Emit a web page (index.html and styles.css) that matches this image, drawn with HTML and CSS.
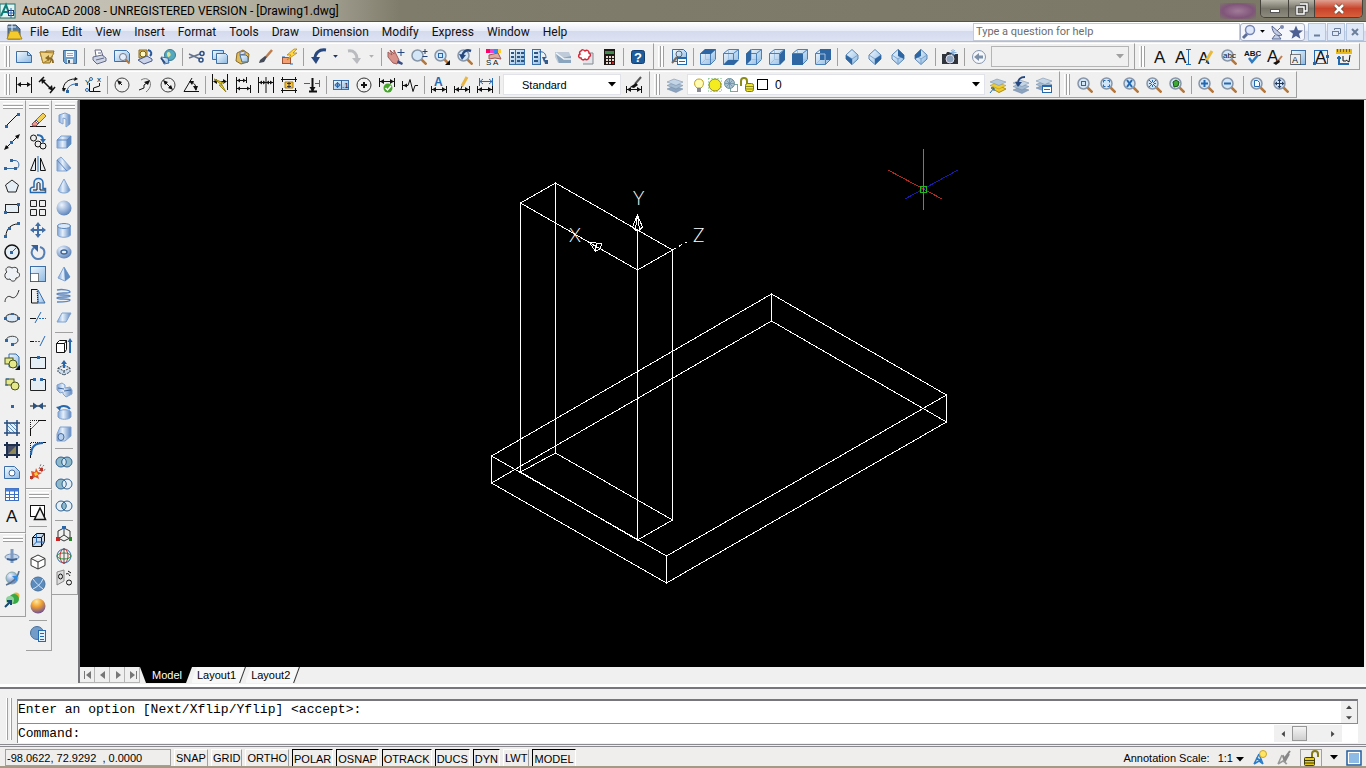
FILE: index.html
```html
<!DOCTYPE html>
<html lang="en">
<head>
  <meta charset="UTF-8">
  <meta name="viewport" content="width=device-width, initial-scale=1.0">
  <link rel="stylesheet" href="styles.css">

  <title>AutoCAD 2008 - UNREGISTERED VERSION - [Drawing1.dwg]</title>
</head>
<body>
  <!-- shared icon parts -->
  <svg class="defs">
    <defs>
      <linearGradient id="sky" x1="0" y1="0" x2="1" y2="1"><stop offset="0" stop-color="#f4faff"/><stop offset="1" stop-color="#8db9e2"/></linearGradient>
      <linearGradient id="steel" x1="0" y1="0" x2="1" y2="0"><stop offset="0" stop-color="#7fa3d3"/><stop offset=".4" stop-color="#e6f0fb"/><stop offset="1" stop-color="#5c86bf"/></linearGradient>
      <radialGradient id="ball" cx=".35" cy=".3" r=".8"><stop offset="0" stop-color="#eef5ff"/><stop offset="1" stop-color="#4d78b4"/></radialGradient>
      <radialGradient id="sun" cx=".4" cy=".2" r=".9"><stop offset="0" stop-color="#ffe9a0"/><stop offset=".4" stop-color="#f0a030"/><stop offset="1" stop-color="#5040b0"/></radialGradient>
    </defs>
    <symbol id="mag" viewBox="0 0 16 16"><path d="M10.5 10.5l5 5" stroke="#b5763a" stroke-width="2.5"/><circle cx="6.5" cy="6.5" r="5.5" fill="#d3e6f8" stroke="#8795a8" stroke-width="1.5"/></symbol>
    <symbol id="dim" viewBox="0 0 16 16"><path d="M.5 0v16M15.5 0v16M2 7.5h12" stroke="#111"/><path d="M1 7.5l4-2.5v5zM15 7.5l-4-2.5v5z" fill="#111"/></symbol>
    <symbol id="lowdim" viewBox="0 0 16 16"><path d="M.5 9v7M15.5 9v7M1 12.5h14" stroke="#111"/><path d="M1 12.5l4-2.5v5zM15 12.5l-4-2.5v5z" fill="#111"/></symbol>
    <symbol id="cube" viewBox="0 0 16 16"><path d="M.5 4.5l5-4h10v10l-5 5H.5z" fill="url(#sky)" stroke="#4a7fb8"/><path d="M5.5 1v9.5h10M5.5 10.5l-5 5" stroke="#a3c2e2" fill="none"/><path d="M.5 4.5h10v11M10.5 4.5l5-4" stroke="#4a7fb8" fill="none"/></symbol>
    <symbol id="iso" viewBox="0 0 16 16"><path d="M8 .5l6 5.5v4l-6 5.5L2 10V6z" fill="url(#sky)" stroke="#5a85b5"/><path d="M2 6l6 4 6-4M8 10v5" stroke="#7ba3cd" fill="none"/></symbol>
    <symbol id="layers" viewBox="0 0 16 16"><path d="M0 12l7-3 9 3-7 3.5z" fill="#8ca4bf" stroke="#6d86a3" stroke-width=".5"/><path d="M0 8.5l7-3 9 3-7 3.5z" fill="#a5bbd2" stroke="#6d86a3" stroke-width=".5"/><path d="M0 5l7-3 9 3-7 3.5z" fill="#c4d5e6" stroke="#6d86a3" stroke-width=".5"/></symbol>
    <symbol id="down" viewBox="0 0 8 5"><path d="M0 0h8L4 4.5z" fill="currentColor"/></symbol>
  </svg>

  <header class="titlebar">
    <svg class="ico" viewBox="0 0 16 16"><rect x="0" y="1" width="15" height="14" fill="#dff3f0" stroke="#1c6f6b"/><path d="M1 13L6 2l4 11M3 9h5" stroke="#0d7d78" stroke-width="2"/><rect x="8.5" y="7.5" width="5" height="5" fill="#fff" stroke="#236"/><path d="M11 5v10M7 10h8" class="b"/></svg>
    <h1>AutoCAD 2008 - UNREGISTERED VERSION - [Drawing1.dwg]</h1>
    <div class="glow"></div>
    <div class="window-buttons">
      <button class="min" aria-label="Minimize"><svg class="ico" viewBox="0 0 16 16"><rect x="3.5" y="8.5" width="9" height="3" fill="#fff" stroke="#555"/></svg></button>
      <button class="max" aria-label="Restore"><svg class="ico" viewBox="0 0 16 16"><path d="M6 3h7v7h-3M3 6h7v7H3z" stroke="#444" stroke-width="3"/><path d="M6 3h7v7h-3M3 6h7v7H3z" stroke="#fff" stroke-width="1.5"/></svg></button>
      <button class="close" aria-label="Close"><svg class="ico" viewBox="0 0 16 16"><path d="M4 4l8 8M12 4l-8 8" stroke="#643" stroke-width="4"/><path d="M4 4l8 8M12 4l-8 8" stroke="#fff" stroke-width="2.5"/></svg></button>
    </div>
  </header>

  <nav class="menubar">
    <svg class="ico" viewBox="0 0 16 16"><path d="M1 1h8l4 4v10H1z" fill="#5479a0" stroke="#456"/><path d="M0 15l3-8h8l4 8z" fill="#f3cb2c" stroke="#a8841a"/><path d="M5 0v7M1 3h8" stroke="#e8f4ff"/></svg>
    <a href="#">File</a>
    <a href="#">Edit</a>
    <a href="#">View</a>
    <a href="#">Insert</a>
    <a href="#">Format</a>
    <a href="#">Tools</a>
    <a href="#">Draw</a>
    <a href="#">Dimension</a>
    <a href="#">Modify</a>
    <a href="#">Express</a>
    <a href="#">Window</a>
    <a href="#">Help</a>
    <input class="help-search" type="text" placeholder="Type a question for help" aria-label="Type a question for help">
    <div class="info">
      <button aria-label="Search"><svg class="ico" viewBox="0 0 16 16"><path d="M6 10l-4 4" stroke="#5c6d99" stroke-width="3"/><circle cx="9" cy="6" r="4.5" fill="#dfe8fb" stroke="#7585b5" stroke-width="1.5"/></svg></button>
      <svg class="tiny"><use href="#down"/></svg>
      <button aria-label="Communication Center"><svg class="ico" viewBox="0 0 16 16"><path d="M3 2l10 9c-5 2-10-2-10-9zM8 7l5-5M6 11l-3 4h9l-3-4" fill="#c5cde4" stroke="#576690"/><circle cx="13" cy="3" r="2" fill="#7c89b2"/></svg></button>
      <button aria-label="Favorites"><svg class="ico" viewBox="0 0 16 16"><path d="M8 1.5l2 4.7 5 .3-4 3.3 1.4 5L8 12l-4.4 2.8L5 9.8 1 6.5l5-.3z" fill="#4e5f93"/></svg></button>
    </div>
    <div class="mdi">
      <button aria-label="Minimize drawing"><svg class="ico" viewBox="0 0 16 16"><path d="M5 11.5h6" stroke="#6b7f9c" stroke-width="2"/></svg></button>
      <button aria-label="Restore drawing"><svg class="ico" viewBox="0 0 16 16"><path d="M6.5 6V4.5h6v5H11M4.5 7.5h6v4h-6zM4 7.5h7" stroke="#6b7f9c"/></svg></button>
      <button aria-label="Close drawing"><svg class="ico" viewBox="0 0 16 16"><path d="M5 5l6 6M11 5l-6 6" stroke="#6b7f9c" stroke-width="2"/></svg></button>
    </div>
  </nav>

  <div class="toolbars">
    <div class="toolbar-row">
      <!-- Standard -->
      <div class="toolbar first">
        <button aria-label="New"><svg class="ico" viewBox="0 0 16 16"><path d="M.5 2.5h11l4 4v7H.5z" class="l"/><path d="M11.5 2.5v4h4" class="s"/></svg></button>
        <button aria-label="Open"><svg class="ico" viewBox="0 0 16 16"><path d="M1 3h6v-1h8l-4 12H4z" class="g"/><path d="M1 3l3 11 7-4 4-6z" fill="#ecd287" stroke="#a8812d"/><path d="M14 14c0-4-2-5-5-5" stroke="#8a6a25" stroke-width="2"/><path d="M10 6v6L6 9z" fill="#8a6a25"/></svg></button>
        <button aria-label="Save"><svg class="ico" viewBox="0 0 16 16"><path d="M1.5 1.5h13v13h-11l-2-2z" fill="#6f9fcb" stroke="#3d6c9b"/><rect x="4" y="2" width="8" height="6" fill="#f5f9fd"/><path d="M5 4.5h6M5 6.5h6" stroke="#9ab"/><rect x="5" y="10" width="6" height="4.5" fill="#e8eef4"/><rect x="6" y="11" width="2" height="3" fill="#456"/></svg></button>
        <span class="sep"></span>
        <button aria-label="Plot"><svg class="ico" viewBox="0 0 16 16"><path d="M5 7l-1-6h6l2 6" fill="#fff" stroke="#668"/><path d="M2 8l9-2 4 3v3l-9 3-4-4z" fill="#cfd5e4" stroke="#60698a"/><path d="M5 11l8-2M7 4h3" stroke="#60698a"/></svg></button>
        <button aria-label="Plot Preview"><svg class="ico" viewBox="0 0 16 16"><path d="M.5 1.5h12l3 3v8H.5z" class="l"/><circle cx="9" cy="8" r="3.5" fill="#e3eefa" stroke="#778"/><path d="M11.5 10.5l4 4" stroke="#b5763a" stroke-width="2"/></svg></button>
        <button aria-label="Publish"><svg class="ico" viewBox="0 0 16 16"><path d="M2 1h8v8H2z" class="g"/><circle cx="6" cy="5" r="3" fill="#fff7c0" stroke="#776010"/><path d="M1 11l9-4 5 3v2l-8 3z" fill="#cad3e8" stroke="#465a8b"/><path d="M11 1c4 1 4 4 2 6" stroke="#29599b" stroke-width="2"/></svg></button>
        <button aria-label="3DDWF"><svg class="ico" viewBox="0 0 16 16"><circle cx="10" cy="6" r="5.5" fill="#54a9bc" stroke="#3b7993"/><path d="M7 4c2-3 5 1 3 3s-3 1-3-3z" fill="#d8e5a0"/><path d="M1 8l7 1 1 5-5 1z" class="l"/><path d="M1 9l4 5" stroke="#2d4f85" stroke-width="2"/></svg></button>
        <span class="sep"></span>
        <button aria-label="Cut"><svg class="ico" viewBox="0 0 16 16"><path d="M0 5l11 5M0 9l11-4" stroke="#64748e" stroke-width="1.5"/><circle cx="13" cy="4.5" r="2" stroke="#2c4f87" stroke-width="1.5"/><circle cx="12" cy="11" r="2" stroke="#2c4f87" stroke-width="1.5"/></svg></button>
        <button aria-label="Copy"><svg class="ico" viewBox="0 0 16 16"><path d="M.5 1.5h11v9H.5z" class="l"/><path d="M4.5 4.5h9l2 2v8h-11z" class="l"/></svg></button>
        <button aria-label="Paste"><svg class="ico" viewBox="0 0 16 16"><path d="M2 4l6-3 6 4-1 8-7 2-5-3z" class="g"/><path d="M5 3l5-1v3l-5 1z" fill="#d9dee9" stroke="#778"/><path d="M5 6h6l2 2v5H7z" class="l"/></svg></button>
        <button aria-label="Match Properties"><svg class="ico" viewBox="0 0 16 16"><path d="M14 1L8 8" stroke="#be7d4c" stroke-width="2.5"/><path d="M9 8l-2-1-5 4-1 3 5-1z" fill="#444b57"/></svg></button>
        <button aria-label="Block Editor"><svg class="ico" viewBox="0 0 16 16"><rect x="1.5" y="8.5" width="8" height="6" fill="#f2a074" stroke="#a05433"/><path d="M13 0L6 6h4l-4 5 10-7h-4l4-4z" fill="#ffd840" stroke="#ae7d12" stroke-width=".7"/><path d="M1 8h3M9 15h3" class="b"/></svg></button>
        <span class="sep"></span>
        <button aria-label="Undo"><svg class="ico" viewBox="0 0 16 16"><path d="M16 1C9 0 5 4 5 10" stroke="#27487f" stroke-width="3"/><path d="M1 8h9l-4 7z" fill="#27487f"/></svg></button>
        <button class="drop" aria-label="Undo list"><svg class="tiny"><use href="#down"/></svg></button>
        <button aria-label="Redo"><svg class="ico" viewBox="0 0 16 16"><path d="M2 2c6-1 9 3 9 8" stroke="#b9bbbf" stroke-width="3"/><path d="M6 9h9l-4 6z" fill="#b9bbbf"/></svg></button>
        <button class="drop off" aria-label="Redo list"><svg class="tiny"><use href="#down"/></svg></button>
        <span class="sep"></span>
        <button aria-label="Pan"><svg class="ico" viewBox="0 0 16 16"><path d="M0 3l4 3-2-5 4 4V1l3 6 2 4-2 4-4-1-5-6z" fill="#d8928a" stroke="#9f5f5c"/><path d="M10 11l5 3-1 2-5-2z" fill="#3b4e84"/><path d="M13 0v7M9.5 3.5h7" stroke="#27487f"/></svg></button>
        <button aria-label="Zoom Realtime"><svg class="ico" viewBox="0 0 16 16"><use href="#mag"/><path d="M14 0v5M11.5 2.5h5M11.5 7.5h5" stroke="#223f72"/></svg></button>
        <button aria-label="Zoom Window"><svg class="ico" viewBox="0 0 16 16"><use href="#mag"/><rect x="4.5" y="4.5" width="4" height="4" class="b"/><path d="M16 11v5h-5z" class="k"/></svg></button>
        <button aria-label="Zoom Previous"><svg class="ico" viewBox="0 0 16 16"><use href="#mag"/><path d="M14 2C9 0 6 3 5 7" stroke="#27487f" stroke-width="2.5"/><path d="M2 5l7 1-4 5z" fill="#27487f"/></svg></button>
        <span class="sep"></span>
        <button aria-label="Properties"><svg class="ico" viewBox="0 0 16 16"><path d="M0 2h4" stroke="#f06" stroke-width="4"/><path d="M4 2h4" stroke="#e4c" stroke-width="4"/><path d="M8 2h4" stroke="#38f" stroke-width="4"/><path d="M12 2h3" stroke="#fc3" stroke-width="4"/><path d="M3 6l9-2 3 6-6-1-6 1z" fill="#e0aca0" stroke="#955"/><text x="0" y="16" class="t8">S A</text></svg></button>
        <button aria-label="DesignCenter"><svg class="ico" viewBox="0 0 16 16"><rect x=".5" y=".5" width="15" height="15" class="l"/><path d="M6.5 0v16" class="s"/><path d="M2 4h3M2 8h3M2 12h3M8 4h3M12 4h3M8 8h3M12 8h3M8 12h3M12 12h3" stroke="#2e5480" stroke-width="2"/></svg></button>
        <button aria-label="Tool Palettes"><svg class="ico" viewBox="0 0 16 16"><rect x=".5" y=".5" width="8" height="15" class="l"/><path d="M2 4h4M2 8h4M2 12h4" stroke="#2e5480" stroke-width="2"/><path d="M7 3c5-1 7 2 7 6" class="b"/><path d="M10 8h4l-2 5zM12 11h4v4h-3z" fill="#345b8d"/></svg></button>
        <button aria-label="Sheet Set Manager"><svg class="ico" viewBox="0 0 16 16"><path d="M0 3h14l2 5v6H3L0 8z" fill="#bfcbd9"/><path d="M1 5l6 4 9-2v7H4z" fill="#8ba5be"/><path d="M1 4l8 6h7" stroke="#eef4f8" stroke-width="1.5"/></svg></button>
        <button aria-label="Markup Set Manager"><svg class="ico" viewBox="0 0 16 16"><path d="M4 4h11v11H5" fill="#e2e6eb" stroke="#84898f"/><path d="M3 2c1-2 3-1 4 0 2-2 4 0 4 2 2 1 2 3 0 4 0 3-3 3-4 2-2 2-4 0-4-1-3 0-3-3-1-4-1-1 0-3 1-3z" fill="#fff" stroke="#d22a3a" stroke-width="1.5"/></svg></button>
        <button aria-label="QuickCalc"><svg class="ico" viewBox="0 0 16 16"><rect x="3" y="0" width="11" height="16" fill="#1d1815"/><rect x="4" y="2" width="9" height="3" fill="#3f8a4c"/><path d="M5 8h2M8 8h2M11 8h2M5 11h2M8 11h2M11 11h2M5 14h2M8 14h2" stroke="#e8d8d0" stroke-width="2"/><path d="M11 14h2" stroke="#c22" stroke-width="2"/></svg></button>
        <span class="sep"></span>
        <button aria-label="Help"><svg class="ico" viewBox="0 0 16 16"><rect x="1.5" y="1.5" width="13" height="13" rx="2" fill="#1f5c9c" stroke="#153f70"/><text x="4" y="13" class="q">?</text></svg></button>
      </div>

      <!-- View -->
      <div class="toolbar">
        <button aria-label="Named Views"><svg class="ico" viewBox="0 0 16 16"><path d="M1.5.5h11l3 3v9h-14z" class="l"/><circle cx="8" cy="5" r="3" stroke="#567"/><path d="M6 8l-5 6" stroke="#776a60" stroke-width="2"/><rect x="6.5" y="8.5" width="9" height="7" fill="#fff" stroke="#2468b0"/><path d="M6 9h10" class="b2"/><path d="M8 12.5h6" class="b"/></svg></button>
        <span class="sep"></span>
        <button aria-label="Top"><svg class="ico" viewBox="0 0 16 16"><use href="#cube"/><path d="M0 5l5-5h11l-5 5z" class="bf"/></svg></button>
        <button aria-label="Bottom"><svg class="ico" viewBox="0 0 16 16"><use href="#cube"/><path d="M0 16l5-5h11l-5 5z" class="bf"/></svg></button>
        <button aria-label="Left"><svg class="ico" viewBox="0 0 16 16"><use href="#cube"/><path d="M0 5l5-5v11l-5 5z" class="bf"/></svg></button>
        <button aria-label="Right"><svg class="ico" viewBox="0 0 16 16"><use href="#cube"/><path d="M11 5l5-5v11l-5 5z" class="bf"/></svg></button>
        <button aria-label="Front"><svg class="ico" viewBox="0 0 16 16"><use href="#cube"/><path d="M0 5h11v11H0z" class="bf"/></svg></button>
        <button aria-label="Back"><svg class="ico" viewBox="0 0 16 16"><use href="#cube"/><path d="M5 0h11v11H5z" class="bf"/><path d="M5 5h5v6" stroke="#a3c2e2"/></svg></button>
        <span class="sep"></span>
        <button aria-label="SW Isometric"><svg class="ico" viewBox="0 0 16 16"><use href="#iso"/><path d="M2 6l6 4v6l-6-6z" class="bf"/></svg></button>
        <button aria-label="SE Isometric"><svg class="ico" viewBox="0 0 16 16"><use href="#iso"/><path d="M14 6l-6 4v6l6-6z" class="bf"/></svg></button>
        <button aria-label="NE Isometric"><svg class="ico" viewBox="0 0 16 16"><use href="#iso"/><path d="M8 0l6 6v4L8 7z" class="bf"/></svg></button>
        <button aria-label="NW Isometric"><svg class="ico" viewBox="0 0 16 16"><use href="#iso"/><path d="M8 0L2 6v4l6-3z" class="bf"/></svg></button>
        <span class="sep"></span>
        <button aria-label="Create Camera"><svg class="ico" viewBox="0 0 16 16"><path d="M0 5h4l1-2h5l1 2h5v10H0z" fill="#30353d"/><circle cx="8" cy="10" r="4" fill="#8ea5bf" stroke="#dde"/><path d="M11 0v7M7.5 3.5h7M9 1l4 5M13 1L9 6" stroke="#8cb3dc"/></svg></button>
        <span class="sep"></span>
        <button aria-label="Previous View"><svg class="ico" viewBox="0 0 16 16"><circle cx="8" cy="8" r="6.5" fill="#f5f7fa" stroke="#8496ae"/><path d="M3 8l5-4v2.5h4v3H8V12z" fill="#7c90aa"/></svg></button>
        <div class="combo disabled views">
          <select disabled aria-label="Viewport"><option></option></select>
          <svg class="arrow"><use href="#down"/></svg>
        </div>
      </div>

      <!-- Text -->
      <div class="toolbar">
        <button aria-label="Multiline Text"><svg class="ico" viewBox="0 0 16 16"><text x="2" y="14" class="ta">A</text></svg></button>
        <button aria-label="Single Line Text"><svg class="ico" viewBox="0 0 16 16"><text x="0" y="14" class="ta">A</text><path d="M11 .5h5M13.5 1v14M11 15.5h5" class="b"/></svg></button>
        <button aria-label="Edit Text"><svg class="ico" viewBox="0 0 16 16"><text x="0" y="15" class="ta">A</text><path d="M14 2L8 12" stroke="#e8b93c" stroke-width="3"/><path d="M8 14l1-3" stroke="#333"/></svg></button>
        <button aria-label="Find"><svg class="ico" viewBox="0 0 16 16"><use href="#mag"/><text x="2" y="9" class="t8">abc</text></svg></button>
        <button aria-label="Spell Check"><svg class="ico" viewBox="0 0 16 16"><text x="0" y="7" class="t8 bold">ABC</text><path d="M5 9l3 4 6-7" stroke="#2f7abf" stroke-width="2.5"/></svg></button>
        <button aria-label="Text Style"><svg class="ico" viewBox="0 0 16 16"><text x="0" y="13" class="ta">A</text><path d="M15 7l-4 5" stroke="#be7d4c" stroke-width="2"/><path d="M12 11l-6 3 3 2 4-3z" class="k"/></svg></button>
        <button aria-label="Scale Text"><svg class="ico" viewBox="0 0 16 16"><rect x="1.5" y="1.5" width="14" height="14" class="l"/><path d="M.5 5.5h10v10H.5z" fill="#eee" stroke="#111" stroke-dasharray="1 1"/><text x="2" y="14" class="t9">A</text></svg></button>
        <button aria-label="Justify Text"><svg class="ico" viewBox="0 0 16 16"><rect x="1.5" y="1.5" width="13" height="13" class="b"/><text x="2" y="14" class="ta">A</text><rect x="13" y="6" width="3" height="3" class="bf"/><rect x="0" y="13" width="3" height="3" class="bf"/></svg></button>
        <button aria-label="Convert Distance"><svg class="ico" viewBox="0 0 16 16"><path d="M0 2.5h16" stroke="#e5b920" stroke-width="5"/><path d="M1.5 0v3M4.5 0v3M7.5 0v3M10.5 0v3M13.5 0v3" stroke="#7a5d0a"/><path d="M3 7v8h10M1 9h4" class="b2"/><path d="M14 6l-1 7-3-2M7 7v5h3" stroke="#111"/></svg></button>
      </div>
    </div>

    <div class="toolbar-row">
      <!-- Dimension -->
      <div class="toolbar first">
        <button aria-label="Linear"><svg class="ico" viewBox="0 0 16 16"><use href="#dim"/></svg></button>
        <button aria-label="Aligned"><svg class="ico" viewBox="0 0 16 16"><path d="M5 0L0 5M16 10l-5 6M3 3l10 10" stroke-width="1.5"/><path d="M2 2l5 1-4 4zM14 13l-5-1 4-4z" class="k"/></svg></button>
        <button aria-label="Arc Length"><svg class="ico" viewBox="0 0 16 16"><path d="M1 14C1 6 6 2 13 2"/><path d="M5 15c0-4 3-8 9-8" class="b"/><path d="M13 0l3 2-4 2zM0 11l2 4 2-4z" class="k"/><rect x="13" y="6" width="3" height="3" class="bf"/><rect x="4" y="13" width="3" height="3" class="bf"/></svg></button>
        <button aria-label="Ordinate"><svg class="ico" viewBox="0 0 16 16"><text x="0" y="8" class="t8">Y</text><text x="12" y="5" class="t8">x</text><path d="M4.5 6v8.5h11M8.5 14v-3l6-2V6"/><circle cx="6" cy="2" r="1.5" class="b"/><circle cx="2" cy="13" r="1.5" class="b"/></svg></button>
        <span class="sep"></span>
        <button aria-label="Radius"><svg class="ico" viewBox="0 0 16 16"><circle cx="8" cy="8" r="7" stroke="#444"/><path d="M8 8L4 4"/><path d="M3 3l5 2-3 3z" class="k"/></svg></button>
        <button aria-label="Jogged"><svg class="ico" viewBox="0 0 16 16"><path d="M4 3c8-5 14 5 5 12" stroke="#777"/><path d="M2 13l5-2V8l4-3"/><path d="M13 3l-2 5-4-3z" class="k"/></svg></button>
        <button aria-label="Diameter"><svg class="ico" viewBox="0 0 16 16"><circle cx="8" cy="8" r="7" stroke="#444"/><path d="M4 4l8 8"/><path d="M3 3l5 2-3 3zM13 13l-5-2 3-3z" class="k"/></svg></button>
        <button aria-label="Angular"><svg class="ico" viewBox="0 0 16 16"><path d="M16 14.5H1L9 1M8 5c4 1 5 4 5 8"/><path d="M6 4h5L9 8zM13 14l-3-5h5z" class="k"/></svg></button>
        <span class="sep"></span>
        <button aria-label="Quick Dimension"><svg class="ico" viewBox="0 0 16 16"><use href="#dim" y="-3"/><path d="M2 2l8 6H7l7 7-5-9h3z" fill="#e8cf2a" stroke="#9b8a14"/></svg></button>
        <button aria-label="Baseline"><svg class="ico" viewBox="0 0 16 16"><path d="M1.5 0v16M11.5 0v6M15.5 8v8M2 3.5h9M2 11.5h13"/><path d="M2 3.5l3-2v4zM11 3.5l-3-2v4zM2 11.5l3-2v4zM15 11.5l-3-2v4z" class="k"/></svg></button>
        <button aria-label="Continue"><svg class="ico" viewBox="0 0 16 16"><path d="M.5 0v16M8 0v16M15.5 0v16M1 5.5h14"/><path d="M1 5.5l3-2v4zM8 5.5l-3-2v4zM8 5.5l3-2v4zM15 5.5l-3-2v4z" class="k"/></svg></button>
        <button aria-label="Dimension Space"><svg class="ico" viewBox="0 0 16 16"><path d="M0 2.5h16M0 13.5h16M1.5 0v5M14.5 0v5M1.5 11v5M14.5 11v5"/><path d="M4 5h8v6H4z" fill="#f5c43f" stroke="#a5790c"/><path d="M8 5v6M6 6.5h4M6 9.5h4" stroke="#334"/></svg></button>
        <button aria-label="Dimension Break"><svg class="ico" viewBox="0 0 16 16"><path d="M8.5 1v13M5 14.5h8" stroke-width="2"/><path d="M0 6.5h6M11 6.5h5M15.5 3v7" class="b"/><path d="M8.5 15l-3-5h6z" class="k"/></svg></button>
        <span class="sep"></span>
        <button aria-label="Tolerance"><svg class="ico" viewBox="0 0 16 16"><rect x=".5" y="3.5" width="15" height="9" class="l"/><path d="M8.5 3v10M4.5 5v6M1.5 8h6" class="b"/><circle cx="4.5" cy="8" r="2" class="b"/><text x="9" y="11" class="t8">.1</text></svg></button>
        <button aria-label="Center Mark"><svg class="ico" viewBox="0 0 16 16"><circle cx="8" cy="8" r="7" stroke="#333"/><path d="M8 5v6M5 8h6" stroke-width="2"/></svg></button>
        <button aria-label="Inspection"><svg class="ico" viewBox="0 0 16 16"><path d="M.5 1v9M15.5 1v9M1 4.5h14"/><path d="M1 4.5L5 2v5zM15 4.5L11 2v5z" class="k"/><circle cx="9" cy="11" r="4.5" fill="#46a52b"/><path d="M6.5 11l2 2 3.5-4" stroke="#fff" stroke-width="1.5"/></svg></button>
        <button aria-label="Jogged Linear"><svg class="ico" viewBox="0 0 16 16"><path d="M.5 4v9M1 8.5h5l2-6 3 12 2-6h3"/><path d="M1 8.5l4-2v4z" class="k"/></svg></button>
        <span class="sep"></span>
        <button aria-label="Dimension Edit"><svg class="ico" viewBox="0 0 16 16"><use href="#lowdim"/><text x="3" y="9" class="ab">A</text></svg></button>
        <button aria-label="Dimension Text Edit"><svg class="ico" viewBox="0 0 16 16"><use href="#lowdim"/><path d="M13 0L8 9" stroke="#eab543" stroke-width="3"/><path d="M7 12l1-3"/></svg></button>
        <button aria-label="Dimension Update"><svg class="ico" viewBox="0 0 16 16"><use href="#lowdim"/><path d="M2.5 1v8M15.5 1v8M3 4.5h12M6 2L3 4.5 6 7M12 2l3 2.5L12 7" class="b"/></svg></button>
        <span class="sep"></span>
        <div class="combo styles">
          <select aria-label="Dimension style"><option>Standard</option></select>
          <svg class="arrow"><use href="#down"/></svg>
        </div>
        <button aria-label="Dimension Style"><svg class="ico" viewBox="0 0 16 16"><use href="#lowdim"/><path d="M15 0L9 7" stroke="#555" stroke-width="2"/><path d="M10 6l-6 4 4 1 4-3z" class="k"/></svg></button>
      </div>

      <!-- Layers -->
      <div class="toolbar">
        <button aria-label="Layer Properties Manager"><svg class="ico" viewBox="0 0 16 16"><use href="#layers"/></svg></button>
        <div class="combo layer">
          <svg class="ico" viewBox="0 0 16 16"><path d="M6 11C2 8 3 2 8 2s6 6 2 9z" fill="#fffbb0" stroke="#c0a020"/><path d="M6 12h4M6 14h4" stroke="#667" stroke-width="1.5"/></svg>
          <svg class="ico" viewBox="0 0 16 16"><rect x="1.5" y="1.5" width="13" height="13" stroke="#6b7" stroke-dasharray="1 2"/><circle cx="8" cy="8" r="6" fill="#f4ec1e" stroke="#8b8a20"/></svg>
          <svg class="ico" viewBox="0 0 16 16"><rect x="7.5" y="7.5" width="7" height="7" fill="#fff" stroke="#7a9"/><circle cx="6.5" cy="6.5" r="5" fill="#a9c1cc" stroke="#6d8fa0"/><path d="M6.5 2v9M2 6.5h9M3.5 3.5l6 6M9.5 3.5l-6 6" stroke="#6588a5" stroke-width=".7"/></svg>
          <svg class="ico" viewBox="0 0 16 16"><path d="M2 9V4c0-4 6-4 6 0v4" stroke="#8c8b1a" stroke-width="2"/><rect x="6.5" y="6.5" width="8" height="8" rx="2" fill="#f1e52b" stroke="#7c7a12"/><path d="M7 9.5h7M7 12h7" stroke="#8c8b1a"/></svg>
          <span class="swatch"></span>
          <select aria-label="Layer"><option>0</option></select>
          <svg class="arrow"><use href="#down"/></svg>
        </div>
        <button aria-label="Make Object's Layer Current"><svg class="ico" viewBox="0 0 16 16"><path d="M1 11l7-3 8 4-7 3.5z" fill="#f0cc30" stroke="#a98d16"/><path d="M0 8.5l7-3 9 3-7 3.5z" fill="#f0cc30" stroke="#a98d16" stroke-width=".5"/><path d="M0 5l7-3 9 3-7 3.5z" fill="#b5c9dd" stroke="#6d86a3" stroke-width=".5"/><path d="M0 16l4-5M1 11h3v3" class="b"/></svg></button>
        <button aria-label="Layer Previous"><svg class="ico" viewBox="0 0 16 16"><use href="#layers" y="1"/><path d="M12 0C7 0 5 3 5 6" stroke="#27487f" stroke-width="2"/><path d="M2 5h7l-4 5z" fill="#27487f"/></svg></button>
        <button aria-label="Layer States Manager"><svg class="ico" viewBox="0 0 16 16"><use href="#layers" y="-1"/><rect x="6.5" y="8.5" width="9" height="7" fill="#fff" stroke="#2468b0"/><path d="M6 9h10" class="b2"/><path d="M8 12.5h6" class="b"/></svg></button>
      </div>

      <!-- Zoom -->
      <div class="toolbar">
        <button aria-label="Zoom Window"><svg class="ico" viewBox="0 0 16 16"><use href="#mag"/><rect x="4.5" y="4.5" width="4" height="4" class="b"/></svg></button>
        <button aria-label="Zoom Dynamic"><svg class="ico" viewBox="0 0 16 16"><use href="#mag"/><path d="M3.5 5.5v-2h2M7.5 3.5h2v2M9.5 7.5v2h-2M5.5 9.5h-2v-2" class="b"/></svg></button>
        <button aria-label="Zoom Scale"><svg class="ico" viewBox="0 0 16 16"><use href="#mag"/><path d="M4 3l5 7M9 3l-5 7" class="b2"/></svg></button>
        <button aria-label="Zoom Center"><svg class="ico" viewBox="0 0 16 16"><use href="#mag"/><path d="M3 3l3 3M10 3L7 6M3 10l3-3M10 10L7 7M6.5 3v2M6.5 8v2M3 6.5h2M8 6.5h2" class="b"/></svg></button>
        <button aria-label="Zoom Object"><svg class="ico" viewBox="0 0 16 16"><use href="#mag"/><path d="M4 5l3-2 3 2-1 4-4 1z" fill="#3faa35" stroke="#14550f"/></svg></button>
        <span class="sep"></span>
        <button aria-label="Zoom In"><svg class="ico" viewBox="0 0 16 16"><use href="#mag"/><path d="M6.5 3v7M3 6.5h7" class="b2"/></svg></button>
        <button aria-label="Zoom Out"><svg class="ico" viewBox="0 0 16 16"><use href="#mag"/><path d="M3 6.5h7" class="b2"/></svg></button>
        <span class="sep"></span>
        <button aria-label="Zoom All"><svg class="ico" viewBox="0 0 16 16"><use href="#mag"/><path d="M4.5 3.5h3l2 2v4h-5z" fill="#f4f9ff" stroke="#2468b0"/></svg></button>
        <button aria-label="Zoom Extents"><svg class="ico" viewBox="0 0 16 16"><use href="#mag"/><path d="M6.5 3v7M3 6.5h7" stroke="#223a60"/><path d="M6.5 1.5l2 2.5h-4zM6.5 11.5l2-2.5h-4zM1.5 6.5L4 4.5v4zM11.5 6.5L9 4.5v4z" fill="#223a60"/></svg></button>
      </div>
    </div>
  </div>

  <main class="workspace">
    <aside class="side">
      <div class="side-col">
        <!-- Draw -->
        <div class="toolbar vertical">
          <button aria-label="Line"><svg class="ico" viewBox="0 0 16 16"><path d="M2 14L14 2"/><rect x="1" y="13" width="3" height="3" class="bf"/><rect x="13" y="1" width="3" height="3" class="bf"/></svg></button>
          <button aria-label="Construction Line"><svg class="ico" viewBox="0 0 16 16"><path d="M1 15L15 1"/><path d="M0 16l2-5 3 3zM16 0l-5 2 3 3z" class="k"/><rect x="6" y="7" width="3" height="3" class="bf"/></svg></button>
          <button aria-label="Polyline"><svg class="ico" viewBox="0 0 16 16"><path d="M1 12.5h11M8 4.5h3c5 0 5 8 1 8" class="s"/><rect x="0" y="11" width="3" height="3" class="bf"/><rect x="10" y="11" width="3" height="3" class="bf"/><rect x="6" y="3" width="3" height="3" class="bf"/></svg></button>
          <button aria-label="Polygon"><svg class="ico" viewBox="0 0 16 16"><path d="M8 2l6.5 5-2.5 7H4L1.5 7z" fill="#e5edf5" stroke="#222"/></svg></button>
          <button aria-label="Rectangle"><svg class="ico" viewBox="0 0 16 16"><rect x="1.5" y="4.5" width="13" height="8" fill="#e5edf5" stroke="#222"/><rect x="0" y="11" width="3" height="3" class="bf"/><rect x="13" y="3" width="3" height="3" class="bf"/></svg></button>
          <button aria-label="Arc"><svg class="ico" viewBox="0 0 16 16"><path d="M2 14C2 7 7 2 14 2"/><rect x="0" y="13" width="3" height="3" class="bf"/><rect x="4" y="5" width="3" height="3" class="bf"/><rect x="13" y="0" width="3" height="3" class="bf"/></svg></button>
          <button aria-label="Circle"><svg class="ico" viewBox="0 0 16 16"><circle cx="8" cy="8" r="7" fill="#e5edf5" stroke="#111" stroke-width="1.5"/><path d="M8 8l4-4" class="b"/><rect x="6" y="7" width="3" height="3" class="bf"/></svg></button>
          <button aria-label="Revision Cloud"><svg class="ico" viewBox="0 0 16 16"><path d="M3 6C0 3 4-1 8 2c4-2 7 1 5 4 4 1 3 6-1 6 0 4-5 4-6 1-5 2-7-5-3-7z" fill="#eef2f6" stroke="#333"/></svg></button>
          <button aria-label="Spline"><svg class="ico" viewBox="0 0 16 16"><path d="M1 14c0-4 3-7 6-5s6 0 8-7" stroke="#333"/></svg></button>
          <button aria-label="Ellipse"><svg class="ico" viewBox="0 0 16 16"><ellipse cx="8" cy="8" rx="6.5" ry="4" fill="#d9e6f3" stroke="#222"/><rect x="0" y="7" width="3" height="3" class="bf"/><rect x="13" y="7" width="3" height="3" class="bf"/><rect x="7" y="3" width="3" height="2" class="bf"/></svg></button>
          <button aria-label="Ellipse Arc"><svg class="ico" viewBox="0 0 16 16"><path d="M2 8c1-5 12-5 12 0 0 3-3 4-6 4" fill="#e5edf5" stroke="#444"/><rect x="1" y="7" width="3" height="3" class="bf"/><rect x="7" y="11" width="3" height="3" class="bf"/></svg></button>
          <button aria-label="Insert Block"><svg class="ico" viewBox="0 0 16 16"><path d="M5 0h7l3 3v10H5z" class="l"/><rect x="1" y="4" width="8" height="6" class="y"/><circle cx="9" cy="10" r="4" class="y"/><path d="M16 11v5h-5z" class="k"/></svg></button>
          <button aria-label="Make Block"><svg class="ico" viewBox="0 0 16 16"><rect x="2" y="3" width="8" height="6" class="y"/><circle cx="11" cy="10" r="4" class="y"/><path d="M1 9h3M2 3h3" class="b"/></svg></button>
          <button aria-label="Point"><svg class="ico" viewBox="0 0 16 16"><rect x="7" y="7" width="3" height="3" class="bf"/></svg></button>
          <button aria-label="Hatch"><svg class="ico" viewBox="0 0 16 16"><path d="M3 3h10v10H3z" fill="#e7f1fb"/><path d="M3 9l4 4M3 5l8 8M5 3l8 8M9 3l4 4" stroke="#5a8cc0"/><path d="M3 0v16M13 0v16M0 3h16M0 13h16" stroke="#244a7b" stroke-width="1.5"/></svg></button>
          <button aria-label="Gradient"><svg class="ico" viewBox="0 0 16 16"><path d="M3 3h10v10H3z" fill="#8e875a"/><path d="M3 3h10l-10 10z" fill="#454d66"/><path d="M3 0v16M13 0v16M0 3h16M0 13h16" stroke="#1d2f4d" stroke-width="2"/></svg></button>
          <button aria-label="Region"><svg class="ico" viewBox="0 0 16 16"><path d="M.5 2.5h10l5 5v7H.5z" class="l"/><circle cx="8" cy="9" r="3" fill="#fff" stroke="#3c6ea8"/></svg></button>
          <button aria-label="Table"><svg class="ico" viewBox="0 0 16 16"><rect x="1.5" y="2.5" width="13" height="12" fill="#fff" stroke="#3f6fc0"/><path d="M2 4h12" stroke="#4a7cd0" stroke-width="3"/><path d="M2 8.5h12M2 11.5h12M5.5 5v9M10.5 5v9" stroke="#3f6fc0"/></svg></button>
          <button aria-label="Multiline Text"><svg class="ico" viewBox="0 0 16 16"><text x="2" y="14" class="ta">A</text></svg></button>
        </div>
        <!-- 3D navigation -->
        <div class="toolbar vertical">
          <button aria-label="3D Pan"><svg class="ico" viewBox="0 0 16 16"><ellipse cx="8" cy="9" rx="7" ry="3" fill="#c5d5e8" stroke="#7a96ba"/><path d="M8 1v14" stroke="#7f9bc2" stroke-width="3"/><path d="M3 11l5 1 5-1" stroke="#3d6296" stroke-width="2"/></svg></button>
          <button aria-label="3D Orbit"><svg class="ico" viewBox="0 0 16 16"><circle cx="8" cy="8" r="6" fill="url(#ball)" stroke="#8aa"/><path d="M2 15C8 13 14 8 15 1" stroke="#5a6f8f" stroke-width="1.5"/><path d="M8 6h5v5z" fill="#2b8be5"/></svg></button>
          <button aria-label="3D Swivel"><svg class="ico" viewBox="0 0 16 16"><circle cx="12" cy="4" r="3.5" fill="#e8b43a"/><circle cx="10" cy="7" r="5" fill="#39a845"/><circle cx="6" cy="8" r="4" fill="#8fd09b"/><path d="M1 15l6-6M3 9h4v4" stroke="#174a72" stroke-width="2"/></svg></button>
        </div>
      </div>

      <div class="side-col">
        <!-- Modify -->
        <div class="toolbar vertical">
          <button aria-label="Erase"><svg class="ico" viewBox="0 0 16 16"><path d="M0 14.5h16"/><path d="M13 1l3 3-7 7-3-3z" fill="#f2cf56" stroke="#94701b"/><path d="M6 8l3 3-1 1-3-3z" fill="#fff" stroke="#456"/><path d="M5 9l3 3-2 2H3l-1-2z" fill="#e69c88" stroke="#945"/></svg></button>
          <button aria-label="Copy"><svg class="ico" viewBox="0 0 16 16"><circle cx="3.5" cy="4" r="3" fill="#eee" stroke="#111"/><circle cx="8" cy="10" r="3" fill="#eee" stroke="#111"/><circle cx="13" cy="12" r="3" fill="#eee" stroke="#111"/><path d="M7 1c4 0 6 1 6 5" class="b2"/><path d="M10 5h6l-3 4z" class="bf"/></svg></button>
          <button aria-label="Mirror"><svg class="ico" viewBox="0 0 16 16"><path d="M5.5 2v12.5H.5zM10.5 2v12.5h5z" fill="#e8eef5" stroke="#111"/><path d="M8 0v16" class="b"/></svg></button>
          <button aria-label="Offset"><svg class="ico" viewBox="0 0 16 16"><path d="M.5 14.5h15v-4H13V5c0-6-9-6-9 0v4C0 9 0 11 .5 14.5z" fill="#e2edf8" stroke="#2468b0" stroke-width="1.5"/><path d="M3 12h4V6c0-2 3-2 3 0v6h5"/></svg></button>
          <button aria-label="Array"><svg class="ico" viewBox="0 0 16 16"><path d="M.5.5h6v6h-6zM9.5.5h6v6h-6zM.5 9.5h6v6h-6zM9.5 9.5h6v6h-6z" fill="#eee" stroke="#222"/></svg></button>
          <button aria-label="Move"><svg class="ico" viewBox="0 0 16 16"><path d="M8 2v12M2 8h12" stroke="#426ea6" stroke-width="2"/><path d="M8 0l3 4H5zM8 16l3-4H5zM0 8l4-3v6zM16 8l-4-3v6z" fill="#426ea6"/></svg></button>
          <button aria-label="Rotate"><svg class="ico" viewBox="0 0 16 16"><path d="M4 3.5C-1 8 3 15 8 15c7 0 9-10 2-12" stroke="#557fb4" stroke-width="2"/><path d="M1 1h7v7z" fill="#345f98"/></svg></button>
          <button aria-label="Scale"><svg class="ico" viewBox="0 0 16 16"><rect x=".5" y=".5" width="15" height="15" class="l"/><rect x=".5" y="7.5" width="8" height="8" fill="#fff" stroke="#111" stroke-dasharray="1 1"/></svg></button>
          <button aria-label="Stretch"><svg class="ico" viewBox="0 0 16 16"><path d="M8 2l7 13H8z" class="l"/><path d="M1.5 1v14H8M2 1.5h5" stroke="#111"/><path d="M7 1l1 14" stroke-dasharray="1 1"/></svg></button>
          <button aria-label="Trim"><svg class="ico" viewBox="0 0 16 16"><path d="M0 8.5h6"/><path d="M5 13l6-11" class="b"/><path d="M9 8.5h7" class="b" stroke-dasharray="2 1"/></svg></button>
          <button aria-label="Extend"><svg class="ico" viewBox="0 0 16 16"><path d="M0 9.5h4"/><path d="M5 9.5h6" class="b" stroke-dasharray="2 1"/><path d="M10 14l5-10" class="b"/></svg></button>
          <button aria-label="Break at Point"><svg class="ico" viewBox="0 0 16 16"><rect x=".5" y="3.5" width="15" height="11" fill="#e5edf5" stroke="#222"/><rect x="7" y="2" width="3" height="3" class="bf"/></svg></button>
          <button aria-label="Break"><svg class="ico" viewBox="0 0 16 16"><path d="M3 3.5H.5v11h15v-11H13" fill="#e5edf5" stroke="#222"/><rect x="3" y="2" width="3" height="3" class="bf"/><rect x="10" y="2" width="3" height="3" class="bf"/></svg></button>
          <button aria-label="Join"><svg class="ico" viewBox="0 0 16 16"><path d="M0 8h16"/><path d="M3 4.5L8 8l-5 3.5zM13 4.5L8 8l5 3.5z" fill="#2b517f"/></svg></button>
          <button aria-label="Chamfer"><svg class="ico" viewBox="0 0 16 16"><path d="M.5 16V9M9 .5h7"/><path d="M.5 9V.5H9" stroke-dasharray="1 1"/><path d="M1 9l8-8" class="b"/></svg></button>
          <button aria-label="Fillet"><svg class="ico" viewBox="0 0 16 16"><path d="M.5 16v-4M13 .5h3"/><path d="M.5 12V.5H12" stroke-dasharray="1 1"/><path d="M1 13C1 5 5 1 13 1" class="b2"/></svg></button>
          <button aria-label="Explode"><svg class="ico" viewBox="0 0 16 16"><path d="M9 7l5-6M11 8l5-3M9 5l2-5" stroke="#777" stroke-dasharray="2 1"/><path d="M1 7l4 1 1-4 2 4 4 1-4 2 1 4-4-2-4 3 1-5z" fill="#e2532a"/><path d="M4 9l3-1 1 3-3 1z" fill="#ffd23b"/><path d="M0 12h3v3H0zM10 4h3v3h-3z" fill="#b3372a"/></svg></button>
        </div>
        <!-- Draw order / Visual styles -->
        <div class="toolbar vertical">
          <button aria-label="Draw Order"><svg class="ico" viewBox="0 0 16 16"><rect x=".5" y="1.5" width="14" height="11" fill="#fff" stroke="#111"/><path d="M10 4l5.5 11.5h-11z" fill="#eee" stroke="#111" stroke-width="1.5"/></svg></button>
          <span class="sep"></span>
          <button aria-label="3D Wireframe"><svg class="ico" viewBox="0 0 16 16"><path d="M2.5 5.5l4-4h8v8l-3 5h-9zM2.5 5.5h9v9M11.5 5.5l3-4" fill="#c8dbf0" stroke="#111"/><path d="M6.5 2v8h8M6.5 10l-4 4" class="b"/></svg></button>
          <button aria-label="3D Hidden"><svg class="ico" viewBox="0 0 16 16"><path d="M8 1l7 3.5v7L8 15l-7-3.5v-7zM1 4.5L8 8l7-3.5M8 8v7" fill="#fff" stroke="#333"/></svg></button>
          <button aria-label="Realistic"><svg class="ico" viewBox="0 0 16 16"><circle cx="8" cy="8" r="7" fill="#5b8bbd" stroke="#48709b"/><path d="M3 3c3 4 6 7 10 10M13 3C11 8 7 11 3 13" stroke="#d5e6f6"/></svg></button>
          <button aria-label="Conceptual"><svg class="ico" viewBox="0 0 16 16"><circle cx="8" cy="8" r="7.5" fill="url(#sun)"/></svg></button>
          <span class="sep"></span>
          <button aria-label="Manage Visual Styles"><svg class="ico" viewBox="0 0 16 16"><circle cx="7" cy="7" r="6.5" fill="#739cc8" stroke="#48709b"/><rect x="8.5" y="4.5" width="7" height="11" fill="#e4f0fb" stroke="#2468b0"/><path d="M10 7.5h4M10 10.5h4M10 13.5h4" class="b"/></svg></button>
        </div>
      </div>

      <div class="side-col">
        <!-- Modeling -->
        <div class="toolbar vertical">
          <button aria-label="Polysolid"><svg class="ico" viewBox="0 0 16 16"><path d="M3 3l6-2 5 2v9l-4 3V7L7 6v6l-4-2z" class="m"/></svg></button>
          <button aria-label="Box"><svg class="ico" viewBox="0 0 16 16"><path d="M1 6l4-4h10v8l-4 4H1z" class="m"/><path d="M1 6h10l4-4M11 6v8" stroke="#5c86bf"/><path d="M11 6l4-4v8l-4 4z" fill="#5f8cc2"/></svg></button>
          <button aria-label="Wedge"><svg class="ico" viewBox="0 0 16 16"><path d="M1 4l4-3 10 11-4 3H1z" class="m"/><path d="M1 4l10 11" stroke="#5c86bf"/></svg></button>
          <button aria-label="Cone"><svg class="ico" viewBox="0 0 16 16"><path d="M8 1l6 11c-1 4-11 4-12 0z" class="m"/></svg></button>
          <button aria-label="Sphere"><svg class="ico" viewBox="0 0 16 16"><circle cx="8" cy="8" r="7.5" fill="url(#ball)"/></svg></button>
          <button aria-label="Cylinder"><svg class="ico" viewBox="0 0 16 16"><path d="M1.5 4v9c1 3 12 3 13 0V4z" class="m"/><ellipse cx="8" cy="4" rx="6.5" ry="2.5" fill="#dbe8f7" stroke="#5c86bf"/></svg></button>
          <button aria-label="Torus"><svg class="ico" viewBox="0 0 16 16"><ellipse cx="8" cy="8" rx="7.5" ry="6.5" fill="url(#ball)"/><ellipse cx="8" cy="8" rx="3" ry="2" fill="#e8eef5" stroke="#3f6699" stroke-width="1.5"/></svg></button>
          <button aria-label="Pyramid"><svg class="ico" viewBox="0 0 16 16"><path d="M8 1l6 10-5 4-7-3z" class="m"/><path d="M8 1l6 10-5 4z" fill="#5f8cc2"/></svg></button>
          <button aria-label="Helix"><svg class="ico" viewBox="0 0 16 16"><path d="M1 2c5-1 13 0 13 2S1 4 1 6s13 0 13 2-13 0-13 2 13 0 13 2-8 2-13 2" stroke="#5c86bf" stroke-width="1.5"/></svg></button>
          <button aria-label="Planar Surface"><svg class="ico" viewBox="0 0 16 16"><path d="M6 3h9l-5 9H1z" class="m"/></svg></button>
          <span class="sep"></span>
          <button aria-label="Extrude"><svg class="ico" viewBox="0 0 16 16"><path d="M.5 5.5l3-3h7v9l-2 3h-8zM.5 5.5h8v9M8.5 5.5l2-3" fill="#fff" stroke="#111"/><path d="M14 15V2" class="b2"/><path d="M14 0l2.5 4h-5z" class="bf"/></svg></button>
          <button aria-label="Presspull"><svg class="ico" viewBox="0 0 16 16"><path d="M8 5l6 3v4l-6 3-6-3V8zM2 8l6 3 6-3M8 11v4" fill="#d1e0f1" stroke="#345" stroke-dasharray="2 1"/><path d="M8 8V3" class="b2"/><path d="M8 0l3 4H5z" class="bf"/></svg></button>
          <button aria-label="Sweep"><svg class="ico" viewBox="0 0 16 16"><path d="M1 3l5-2 3 2v3l5-1 2 3v4l-6 3-3-3v-2l-3 1-3-3z" class="m"/><path d="M2 6l6 1M8 9l7-1" stroke="#41699f"/></svg></button>
          <button aria-label="Revolve"><svg class="ico" viewBox="0 0 16 16"><path d="M2 8c2-3 12-3 13 0v5c-2 3-11 3-13 0z" class="m"/><path d="M3 5c1-4 8-4 11 0" class="b2"/><path d="M0 3l5-1-1 5z" class="bf"/></svg></button>
          <button aria-label="Loft"><svg class="ico" viewBox="0 0 16 16"><path d="M4 1h11v9L9 15H1V8z" class="m"/><ellipse cx="5" cy="11" rx="3" ry="3.5" fill="#b9d1ec" stroke="#41699f"/></svg></button>
          <span class="sep"></span>
          <button aria-label="Union"><svg class="ico" viewBox="0 0 16 16"><circle cx="5" cy="8" r="5" fill="#8fb9c9" stroke="#2c6192"/><circle cx="11" cy="8" r="5" fill="#8fb9c9" stroke="#2c6192"/><path d="M8 4c-3 2-3 6 0 8 3-2 3-6 0-8z" fill="#d5e6ef" stroke="#2c6192"/></svg></button>
          <button aria-label="Subtract"><svg class="ico" viewBox="0 0 16 16"><circle cx="5" cy="8" r="5" fill="#8fb9c9" stroke="#2c6192"/><circle cx="11" cy="8" r="5" fill="#e6eff5" stroke="#2c6192"/><path d="M8 4c3 2 3 6 0 8" stroke="#2c6192"/></svg></button>
          <button aria-label="Intersect"><svg class="ico" viewBox="0 0 16 16"><circle cx="5" cy="8" r="5" fill="#e6eff5" stroke="#2c6192"/><circle cx="11" cy="8" r="5" fill="#e6eff5" stroke="#2c6192"/><path d="M8 4c-3 2-3 6 0 8 3-2 3-6 0-8z" fill="#8fb9c9" stroke="#2c6192"/></svg></button>
          <span class="sep"></span>
          <button aria-label="3D Move"><svg class="ico" viewBox="0 0 16 16"><path d="M8 9V2M8 9l-6 4M8 9l6 4M2 5v7l6 3 6-3V5L8 2z" stroke="#333"/><rect x="0" y="11" width="4" height="4" fill="#c22"/><rect x="13" y="11" width="3" height="4" fill="#282"/><rect x="6" y="0" width="4" height="3" class="bf"/></svg></button>
          <button aria-label="3D Rotate"><svg class="ico" viewBox="0 0 16 16"><circle cx="8" cy="8" r="7" stroke="#2468b0"/><ellipse cx="8" cy="8" rx="4" ry="7" stroke="#c33"/><ellipse cx="8" cy="8" rx="7" ry="3" stroke="#383"/><path d="M8 0v16" stroke="#555"/></svg></button>
          <button aria-label="3D Align"><svg class="ico" viewBox="0 0 16 16"><path d="M1 2l7-2v11l-7 4z" fill="#ddd" stroke="#888"/><ellipse cx="4.5" cy="6.5" rx="2" ry="2.5" stroke="#111"/><circle cx="13" cy="12.5" r="2.5" stroke="#111"/><path d="M10 4c2-1 3 0 4 2M12 1l3 2"/></svg></button>
        </div>
      </div>
    </aside>

    <section class="view">
      <div class="canvas">
        <svg class="drawing" viewBox="80 100 1284 567">
          <!-- base plate -->
          <path d="M491.5 456L771.5 294 946.5 395 666.5 556z"/>
          <path d="M491.5 483L771.5 321 946.5 422 666.5 583z"/>
          <path d="M491.5 456v27M771.5 294v27M946.5 395v27M666.5 556v27"/>
          <!-- upright plate -->
          <path d="M520.5 203L555.5 183 672.5 250 637.5 270z"/>
          <path d="M520.5 472L555.5 453 672.5 520 637.5 540z"/>
          <path d="M520.5 203v269M555.5 183v270M672.5 250v270M637.5 230v310"/>
          <!-- UCS icon -->
          <path d="M637.5 215l-5 12 3 3h4l3-3zM635.5 229l2-14 2 14"/>
          <path d="M589.5 242.5l12 1-1 5-5 3zM589.5 242.5l9 6M595 251l2-7"/>
          <path d="M672.5 250l14-8" stroke-dasharray="4 3"/>
          <text x="633" y="205">Y</text>
          <text x="569" y="242">X</text>
          <text x="693" y="242">Z</text>
          <!-- crosshair -->
          <path class="axis-x" d="M888 170l54 29"/>
          <path class="axis-z" d="M958 170l-53 29"/>
          <path class="axis-y" d="M923.5 149v61"/>
          <rect class="axis-y" x="920.5" y="186.5" width="6" height="6"/>
        </svg>
      </div>
      <div class="tabs">
        <button class="nav" aria-label="First"><svg class="ico" viewBox="0 0 16 16"><path d="M4.5 4v8" stroke="#777"/><path d="M11 4v8L6 8z" fill="#777"/></svg></button>
        <button class="nav" aria-label="Previous"><svg class="ico" viewBox="0 0 16 16"><path d="M10 4v8L5 8z" fill="#777"/></svg></button>
        <button class="nav" aria-label="Next"><svg class="ico" viewBox="0 0 16 16"><path d="M6 4v8l5-4z" fill="#777"/></svg></button>
        <button class="nav" aria-label="Last"><svg class="ico" viewBox="0 0 16 16"><path d="M11.5 4v8" stroke="#777"/><path d="M5 4v8l5-4z" fill="#777"/></svg></button>
        <button class="tab active">Model</button>
        <button class="tab">Layout1</button>
        <button class="tab">Layout2</button>
      </div>
    </section>
  </main>

  <section class="command">
    <div class="history">
      <p>Enter an option [Next/Xflip/Yflip] &lt;accept&gt;:</p>
      <div class="vscroll">
        <button aria-label="Scroll up"><svg class="arrow up"><use href="#down"/></svg></button>
        <button aria-label="Scroll down"><svg class="arrow"><use href="#down"/></svg></button>
      </div>
    </div>
    <div class="prompt">
      <label for="cmd">Command:</label>
      <input type="text" id="cmd">
      <div class="hscroll">
        <button aria-label="Scroll left"><svg class="arrow left"><use href="#down"/></svg></button>
        <span class="thumb"></span>
        <button aria-label="Scroll right"><svg class="arrow right"><use href="#down"/></svg></button>
      </div>
    </div>
  </section>

  <footer class="status">
    <div class="coords">-98.0622, 72.9292&nbsp; , 0.0000</div>
    <button>SNAP</button>
    <button>GRID</button>
    <button>ORTHO</button>
    <button class="on">POLAR</button>
    <button class="on">OSNAP</button>
    <button class="on">OTRACK</button>
    <button class="on">DUCS</button>
    <button class="on">DYN</button>
    <button>LWT</button>
    <button class="on">MODEL</button>
    <div class="tray">
      <span>Annotation Scale:</span>
      <a href="#">1:1 <svg class="arrow"><use href="#down"/></svg></a>
      <svg class="ico" viewBox="0 0 16 16"><path d="M7 4L2 14M7 4l4 10M2 14l5-3 4 3M4 8l6 3" stroke="#2b7dc9" stroke-width="1.5"/><circle cx="11" cy="4" r="3.5" fill="#ffe566" stroke="#c9a52b"/></svg>
      <svg class="ico" viewBox="0 0 16 16"><path d="M6 5L2 14M7 5l3 9M2 14l5-3 4 3" stroke="#999" stroke-width="1.5"/><path d="M14 1L8 9l-1-3M13 4l-4 7" stroke="#888" stroke-width="2"/></svg>
      <span class="lock"><svg class="ico" viewBox="0 0 16 16"><path d="M9 8V4c0-4 6-4 6 0v3" stroke="#847c18" stroke-width="2"/><rect x="1.5" y="7.5" width="10" height="8" rx="1" fill="#e4c81c" stroke="#403c08"/><path d="M2 10.5h9M2 13h9" stroke="#403c08"/></svg></span>
      <svg class="arrow"><use href="#down"/></svg>
      <svg class="ico" viewBox="0 0 16 16"><rect x="1" y="1" width="14" height="14" fill="#fff" stroke="#225c9e" stroke-width="1.5"/><rect x="3" y="3" width="10" height="10" fill="#8dbbe5"/></svg>
    </div>
  </footer>
</body>
</html>
```
FILE: styles.css
```css
* {
  box-sizing: border-box;
}

body {
  margin: 0;
  height: 100vh;
  display: flex;
  flex-direction: column;
  overflow: hidden;
  background-color: #f0f0f0;
  font-family: "Liberation Sans", Arial, sans-serif;
  font-size: 11px;
  color: #000;
}

button {
  padding: 0;
  border: none;
  background: none;
  font: inherit;
  color: inherit;
}

.defs {
  position: absolute;
  width: 0;
  height: 0;
}

/* icons */
.ico {
  width: 16px;
  height: 16px;
  flex: none;
  display: block;
  fill: none;
  overflow: visible;
}

.ico path:not([fill], [stroke], [class]) {
  stroke: #111;
}

.ico .b { stroke: #2468b0; fill: none; }
.ico .b2 { stroke: #2468b0; stroke-width: 2; fill: none; }
.ico .bf { fill: #2d66a3; }
.ico .k { fill: #111; }
.ico .s { stroke: #3c6ea8; }
.ico .l { fill: url(#sky); stroke: #3c6ea8; }
.ico .m { fill: url(#steel); stroke: #7fa3d3; }
.ico .g { fill: #e0bd5c; stroke: #8a6a25; }
.ico .y { fill: #e5e88a; stroke: #48541c; }
.ico text { fill: #111; }
.ico .ta { font-size: 17px; }
.ico .ab { font-size: 12px; font-weight: bold; fill: #2468b0; }
.ico .q { font-size: 13px; font-weight: bold; fill: #fff; }
.ico .t8 { font-size: 8px; }
.ico .t9 { font-size: 9px; }
.ico .bold { font-weight: bold; }

.arrow {
  width: 8px;
  height: 5px;
  flex: none;
}

.arrow.up { transform: rotate(180deg); }
.arrow.left { transform: rotate(90deg); }
.arrow.right { transform: rotate(-90deg); }

.tiny {
  width: 5px;
  height: 3px;
  flex: none;
}

/* title bar */
.titlebar {
  height: 22px;
  flex: none;
  display: flex;
  align-items: center;
  background: linear-gradient(to right, #c9c5b9, #bdb9ab 200px, #a19d8e 330px, #807c6c 400px, #7b7868);
  border-bottom: 1px solid #55534a;
}

.titlebar h1 {
  margin: 0 0 0 6px;
  flex: 1;
  font-family: Roboto, sans-serif;
  font-size: 12px;
  font-weight: normal;
  white-space: nowrap;
}

.glow {
  width: 36px;
  height: 16px;
  margin-right: 4px;
  background: radial-gradient(#a27b99, #80557a 60%, #7b7868);
}

.window-buttons {
  display: flex;
  align-self: flex-start;
  margin-right: 3px;
  border: 1px solid #45423c;
  border-top: none;
  border-radius: 0 0 5px 5px;
  overflow: hidden;
}

.window-buttons button {
  height: 17px;
  display: flex;
  align-items: center;
  justify-content: center;
  background: linear-gradient(#b9b6ac, #77746a 50%, #8d8a7e);
  border-right: 1px solid #45423c;
}

.window-buttons .min { width: 28px; }
.window-buttons .max { width: 26px; }

.window-buttons .close {
  width: 47px;
  border-right: none;
  background: linear-gradient(#e0a090, #c8432a 50%, #d8603c);
}

/* menu bar */
.menubar {
  height: 20px;
  flex: none;
  display: flex;
  align-items: center;
  margin-bottom: 1px;
  padding: 0 2px 0 7px;
  gap: 13px;
  background: linear-gradient(#fff, #e9edf8 45%, #d5dbee 50%, #dde3f3);
  border-bottom: 1px solid #b8bcc8;
  font-family: Roboto, sans-serif;
  font-size: 12px;
}

.menubar > .ico {
  margin-right: -6px;
}

.menubar a {
  color: #111;
  text-decoration: none;
}

.help-search {
  width: 267px;
  height: 18px;
  margin-left: auto;
  padding: 0 2px;
  border: 1px solid #c5cad8;
  background-color: #fff;
  font-family: Roboto, sans-serif;
  font-size: 11px;
}

.help-search::placeholder {
  color: #6d6d6d;
}

.info {
  width: 65px;
  height: 18px;
  margin-left: -13px;
  display: flex;
  align-items: center;
  justify-content: space-between;
  background-color: #f4f6fb;
  border: 1px solid #a4adc4;
  border-radius: 3px;
}

.mdi {
  display: flex;
  gap: 1px;
  margin-left: -10px;
}

.mdi button {
  width: 18px;
  height: 18px;
  background-color: #dfe9f7;
  border: 1px solid #b4c6df;
}

/* toolbars */
.toolbars {
  flex: none;
  border-bottom: 1px solid #77777b;
}

.toolbar-row {
  display: flex;
  height: 28px;
}

.toolbar {
  display: flex;
  align-items: center;
  height: 27px;
  padding: 0 4px 0 13px;
  border-top: 1px solid #fff;
  border-right: 1px solid #a0a0a0;
  border-bottom: 1px solid #a0a0a0;
  background:
    linear-gradient(to right, #fff 1px, #f0f0f0 1px 2px, #a0a0a0 2px 3px, #fff 3px 5px, #a0a0a0 5px 6px, transparent 6px) 4px 2px / 6px 21px no-repeat;
}

.toolbar.first {
  padding-left: 12px;
}

.toolbar button {
  width: 23px;
  height: 22px;
  flex: none;
  display: flex;
  align-items: center;
  justify-content: center;
}

.toolbar .drop {
  width: 13px;
  color: #1d3566;
}

.toolbar .off {
  color: #b0b0b0;
}

.sep {
  flex: none;
  width: 1px;
  height: 18px;
  margin: 0 2px 0 3px;
  background-color: #a0a0a0;
}

.combo {
  height: 21px;
  flex: none;
  display: flex;
  align-items: center;
  margin: 0 1px;
  padding-right: 4px;
  background-color: #fff;
  border: 1px solid #e2e3ea;
}

.combo select {
  flex: 1;
  min-width: 0;
  height: 19px;
  padding: 0 7px;
  appearance: none;
  border: none;
  background: none;
  color: #000;
  font-family: "Liberation Sans", Arial, sans-serif;
  font-size: 12px;
}

.combo.styles { width: 118px; }
.combo.styles select { padding-left: 18px; font-size: 11px; }
.combo.layer { width: 298px; padding-left: 3px; }
.combo.views { width: 138px; }

.combo.disabled {
  background-color: #f0f0f0;
  border-color: #b5b5b5;
  color: #a0a0a0;
}

.swatch {
  width: 11px;
  height: 11px;
  margin-left: 2px;
  background-color: #fff;
  border: 1px solid #000;
}

/* workspace */
.workspace {
  flex: 1;
  min-height: 0;
  display: flex;
}

.side {
  width: 78px;
  flex: none;
  display: flex;
}

.side-col {
  width: 26px;
}

.toolbar.vertical {
  flex-direction: column;
  width: 26px;
  height: auto;
  padding: 8px 1px 5px 0;
  border-top: 1px solid #fff;
  background:
    linear-gradient(#fff 1px, #f0f0f0 1px 2px, #a0a0a0 2px 3px, #fff 3px 5px, #a0a0a0 5px 6px, transparent 6px) 3px 2px / 20px 6px no-repeat;
}

.toolbar.vertical ~ .vertical {
  padding-top: 11px;
}

.vertical .sep {
  width: 18px;
  height: 1px;
  margin: 3px 0 2px;
}

.view {
  flex: 1;
  min-width: 0;
  display: flex;
  flex-direction: column;
  padding-right: 2px;
  border-left: 2px solid #77777b;
}

.canvas {
  flex: 1;
  min-height: 0;
  background-color: #000;
}

.drawing {
  display: block;
  width: 100%;
  height: 100%;
  fill: none;
  stroke: #fff;
  shape-rendering: crispEdges;
}

.drawing text {
  fill: #fff;
  stroke: none;
  font-family: Lato, sans-serif;
  font-weight: 300;
  font-size: 19px;
}

.drawing .axis-x { stroke: #b02a20; }
.drawing .axis-y { stroke: #22b422; }
.drawing .axis-z { stroke: #1a1aa8; }

.tabs {
  height: 16px;
  flex: none;
  display: flex;
}

.tabs .nav {
  width: 15px;
  border-right: 1px solid #b5b5b5;
  border-bottom: 1px solid #b5b5b5;
  overflow: hidden;
}

.tabs .tab {
  height: 16px;
  padding: 0 10px 0 5px;
  background: linear-gradient(110deg, transparent 4px, #f8f8f8 5px, #f8f8f8 calc(100% - 7px), #333 calc(100% - 6px), transparent calc(100% - 5px));
}

.tabs .active {
  padding: 0 10px 0 12px;
  background: #000;
  color: #fff;
  clip-path: polygon(0 0, 100% 0, calc(100% - 6px) 100%, 6px 100%);
}

/* command line */
.command {
  flex: none;
  height: 61px;
  margin-top: 1px;
  padding: 0 8px 0 17px;
  border-top: 3px solid #fff;
  border-bottom: 1px solid #8a8a90;
  box-shadow: inset 0 2px #77777b;
  background: linear-gradient(to right, #fff 1px, #a0a0a0 1px 2px, #f0f0f0 2px 4px, #fff 4px 5px, #a0a0a0 5px 6px, transparent 6px) 6px 11px / 8px 42px no-repeat;
  font-family: "Liberation Mono", "Courier New", monospace;
  font-size: 13px;
}

.history {
  height: 25px;
  margin-top: 12px;
  display: flex;
  justify-content: space-between;
  background-color: #fff;
  border: 1px solid #8a8a90;
  border-top: 2px solid #77777b;
}

.history p {
  margin: 0;
  line-height: 18px;
}

.prompt {
  height: 19px;
  display: flex;
  align-items: center;
  padding-right: 16px;
  background-color: #fff;
  border-left: 1px solid #8a8a90;
}

.prompt input {
  flex: 1;
  min-width: 0;
  height: 18px;
  border: none;
  outline: none;
  font: inherit;
}

.vscroll {
  width: 16px;
  display: flex;
  flex-direction: column;
  background-color: #f0f0f0;
}

.vscroll button {
  flex: 1;
  display: flex;
  align-items: center;
  justify-content: center;
}

.hscroll {
  width: 68px;
  height: 17px;
  display: flex;
  align-items: center;
  background-color: #f0f0f0;
}

.hscroll button {
  width: 18px;
  height: 17px;
  display: flex;
  align-items: center;
  justify-content: center;
}

.hscroll button:last-child {
  margin-left: auto;
}

.thumb {
  width: 15px;
  height: 15px;
  background: linear-gradient(#f4f4f4, #cfcfcf);
  border: 1px solid #979797;
}

.command .arrow {
  width: 6px;
  height: 4px;
  color: #444;
}

/* status bar */
.status {
  flex: none;
  height: 22px;
  margin-top: 1px;
  padding: 2px 4px 0 5px;
  display: flex;
  gap: 3px;
  border-top: 1px solid #8a8a90;
  border-bottom: 2px solid #a39a86;
  background-color: #f0eeec;
}

.coords {
  width: 166px;
  padding: 0 1px;
  line-height: 16px;
  border: 1px solid #a0a0a0;
}

.status button {
  padding: 0 1px;
  border: 1px solid #fff;
  border-right-color: #a0a0a0;
  border-bottom: none;
}

.status button.on {
  padding-top: 2px;
  border-color: #000 #fff #fff #000;
}

.tray {
  margin-left: auto;
  display: flex;
  align-items: center;
  gap: 8px;
}

.tray a {
  color: #000;
  text-decoration: none;
}

.lock {
  padding: 0 2px;
  border: 1px solid #a0a0a0;
  border-bottom: none;
}
```
